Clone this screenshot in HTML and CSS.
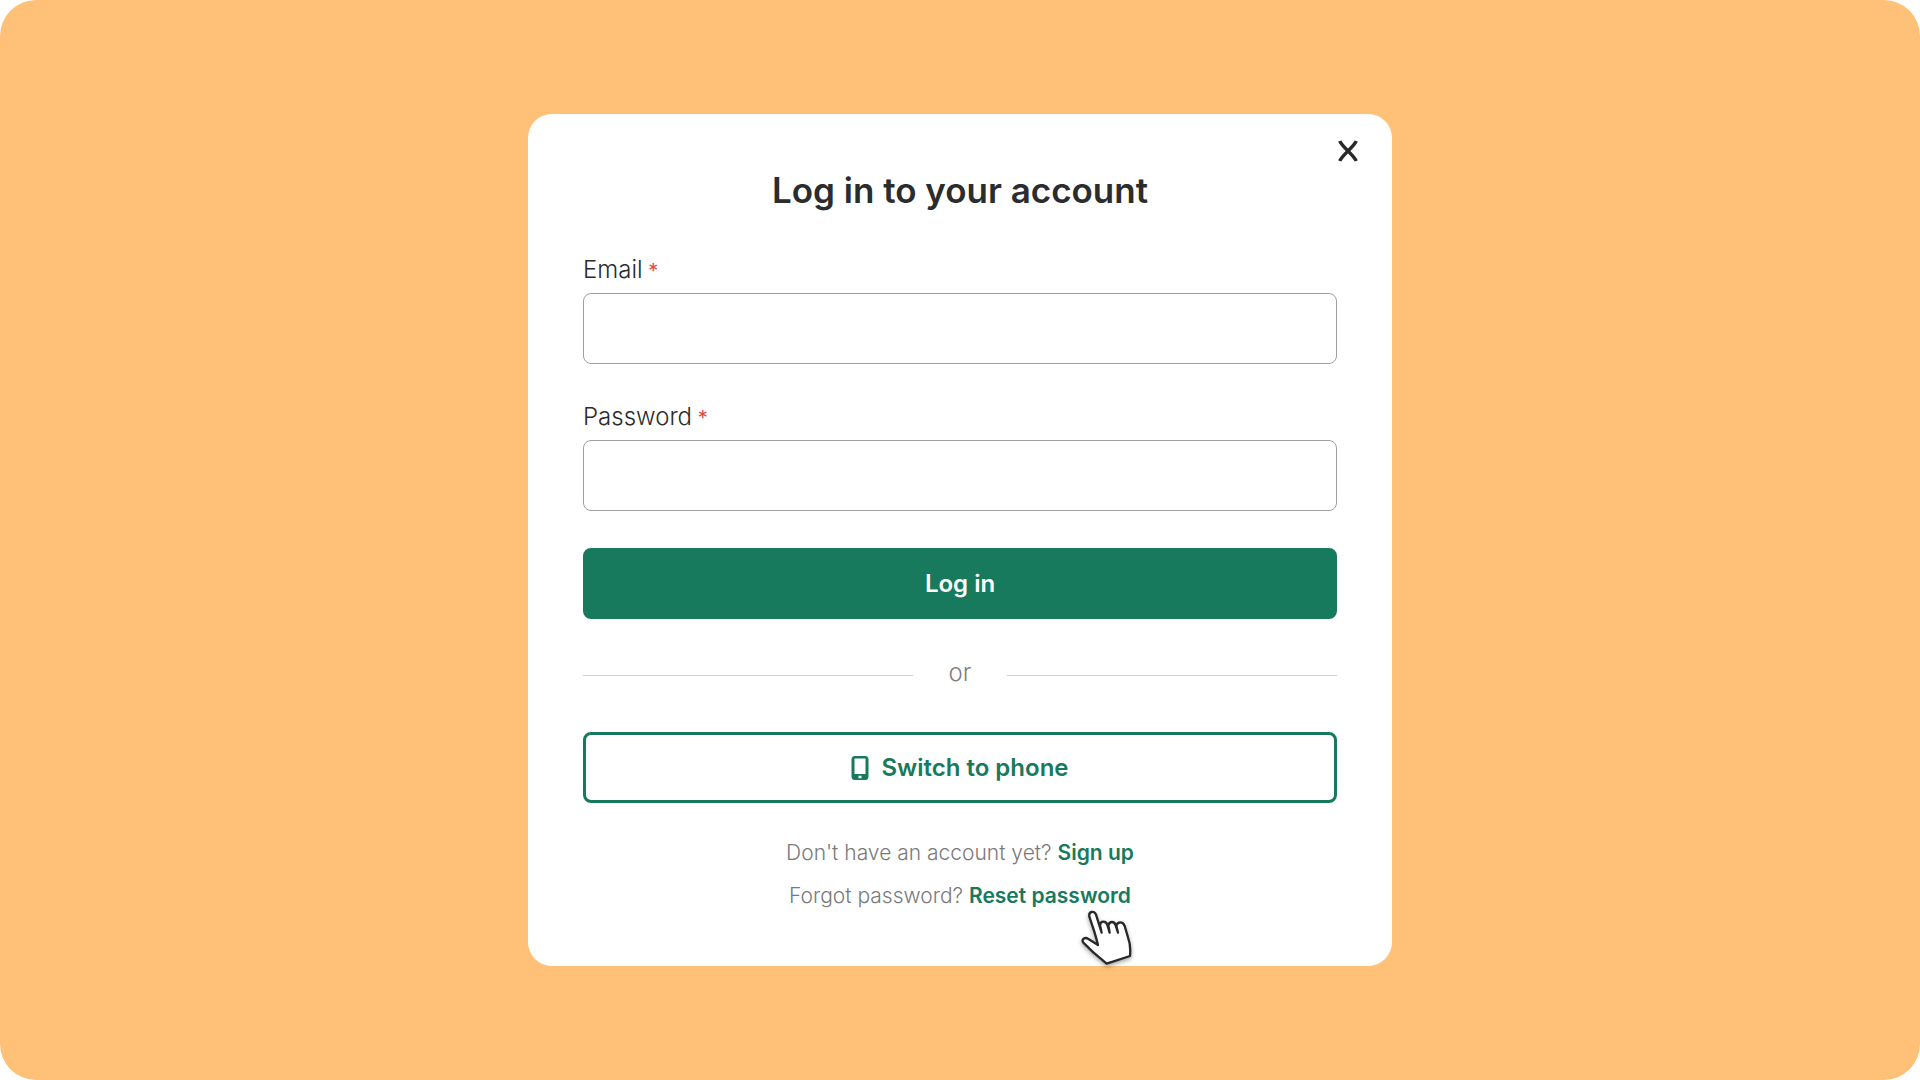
FILE: index.html
```html
<!DOCTYPE html>
<html lang="en">
<head>
<meta charset="utf-8">
<meta name="viewport" content="width=device-width, initial-scale=1">
<title>Log in</title>
<link rel="stylesheet" href="styles.css">
</head>
<body>
<main class="backdrop">
  <section class="card" aria-labelledby="title">
    <button class="close" type="button" aria-label="Close">
      <svg width="20" height="22" viewBox="0 0 20 22" fill="none" stroke="currentColor" stroke-width="3.300"><path d="M1.800 1Q2.500 3.500 10 11Q17.500 18.500 18.200 21M18.200 1Q17.500 3.500 10 11Q2.500 18.500 1.800 21"/></svg>
    </button>
    <h1 class="title" id="title">Log in to your account</h1>
    <form class="form">
      <div class="field">
        <label class="label" for="email">Email<span class="required"> *</span></label>
        <input class="input" id="email" type="email" required>
      </div>
      <div class="field">
        <label class="label" for="password">Password<span class="required"> *</span></label>
        <input class="input" id="password" type="password" required>
      </div>
      <button class="button primary" type="submit">Log in</button>
    </form>
    <div class="divider">or</div>
    <button class="button secondary" type="button">
      <svg width="18" height="24" viewBox="0 0 18 24"><path fill="currentColor" fill-rule="evenodd" d="M4 0h10q3.500 0 3.500 3.500v17q0 3.500-3.500 3.500H4Q.5 24 .5 20.500v-17Q.5 0 4 0zM3.500 2.500v15.500h11V2.500zM7.500 19.700v2.600h3v-2.600z"/></svg>
      Switch to phone
    </button>
    <div class="links">
      <p class="line">Don't have an account yet? <a class="link" href="#signup">Sign up</a></p>
      <p class="line">Forgot password? <a class="link" href="#reset">Reset password<svg class="cursor" width="56" height="62" viewBox="48 54 168 186" aria-hidden="true"><path d="M64 158Q59 151 65 146Q71 142 78 146L108 165Q104 148 97 125L82 80Q80 68 89 66Q98 64 102 74L119 128L114 106Q115 95 124 95Q133 95 136 105L143 128L139 106Q142 96 150 96Q158 96 161 106L168 128L163 107Q166 97 175 97Q184 97 188 108L198 142Q207 166 204 198L134 221L94 187Z" fill="#fff" stroke="#292929" stroke-width="7" stroke-linejoin="round"/></svg></a></p>
    </div>
  </section>
</main>
</body>
</html>
```
FILE: styles.css
```css
* {
  box-sizing: border-box;
}

body {
  margin: 0;
  background: #fff;
  color: #2b2c2d;
  font-family: Inter, "Liberation Sans", sans-serif;
}

.backdrop {
  display: grid;
  place-items: center;
  min-height: 100vh;
  padding: 24px;
  border-radius: 36px;
  background: #ffc177;
}

.card {
  position: relative;
  width: 100%;
  max-width: 864px;
  padding: 54px 55px 56px;
  border-radius: 24px;
  background: #fff;
}

.close {
  position: absolute;
  top: 17px;
  right: 24px;
  display: grid;
  place-items: center;
  width: 40px;
  height: 40px;
  padding: 0;
  border: 0;
  background: none;
  color: #292929;
  cursor: pointer;
}

.title {
  margin: 0 0 42px;
  font-size: 35px;
  font-weight: 600;
  line-height: 44px;
  text-align: center;
}

.form {
  display: grid;
  gap: 37px;
}

.field {
  display: grid;
  gap: 7px;
}

.label {
  font-size: 24px;
  font-weight: 300;
  line-height: 32px;
}

.required {
  color: #e8473f;
  font-size: 20px;
  font-weight: 400;
  line-height: 1;
}

.input {
  width: 100%;
  height: 71px;
  padding: 0 20px;
  border: 1px solid #a0a0a0;
  border-radius: 8px;
  background: #fff;
  color: inherit;
  font: inherit;
  font-size: 24px;
}

.button {
  display: flex;
  align-items: center;
  justify-content: center;
  gap: 12px;
  width: 100%;
  height: 71px;
  border: 3px solid #177a5c;
  border-radius: 8px;
  font: inherit;
  font-size: 24px;
  font-weight: 600;
  cursor: pointer;
}

.primary {
  background: #177a5c;
  color: #fff;
}

.secondary {
  background: #fff;
  color: #177a5c;
}

.divider {
  display: flex;
  align-items: center;
  gap: 36px;
  margin: 38px 0 43px;
  color: #7f7f7f;
  font-size: 24px;
  font-weight: 300;
  line-height: 32px;
}

.divider::before,
.divider::after {
  content: "";
  flex: 1;
  height: 1px;
  margin-top: 4px;
  background: #d0d0d0;
}

.links {
  display: grid;
  gap: 15px;
  margin-top: 36px;
  text-align: center;
}

.line {
  margin: 0;
  color: #7a7a7a;
  font-size: 21px;
  font-weight: 300;
  line-height: 28px;
}

.link {
  position: relative;
  display: inline-block;
  color: #177a5c;
  font-weight: 600;
  text-decoration: none;
}

.cursor {
  position: absolute;
  top: calc(100% - 2px);
  right: -3px;
  overflow: visible;
  filter: drop-shadow(0 2px 2px rgb(0 0 0 / 35%));
}
```
